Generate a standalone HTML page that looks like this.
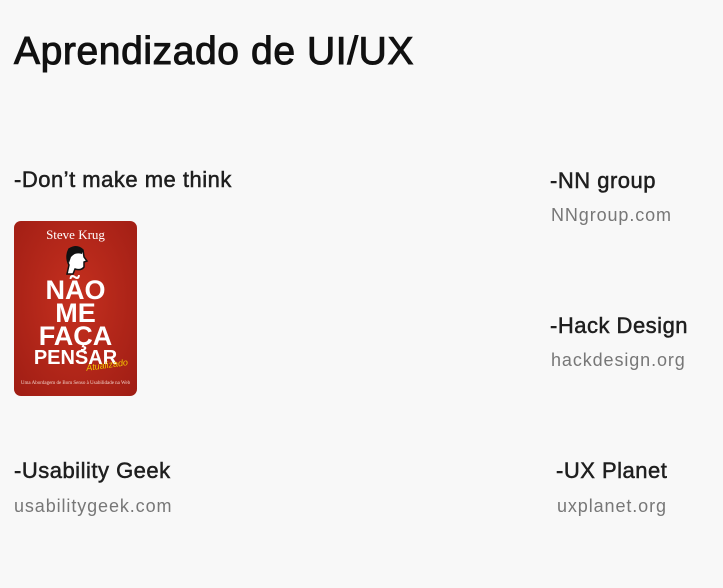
<!DOCTYPE html>
<html><head><meta charset="utf-8"><style>
body{margin:0;width:723px;height:588px;background:#f8f8f8;font-family:"Liberation Sans",sans-serif;position:relative;overflow:hidden;color:#1b1b1b}
.a{position:absolute;white-space:nowrap}
h1{position:absolute;left:14px;top:30px;margin:0;font-size:39px;font-weight:normal;letter-spacing:0.6px;color:#111;-webkit-text-stroke:1px #111}
.h{font-size:22px;color:#1e1e1e;letter-spacing:0.5px;-webkit-text-stroke:0.5px #1e1e1e}
.l{font-size:18px;color:#777;letter-spacing:0.9px}
.book{position:absolute;left:14px;top:221px;width:123px;height:175px;border-radius:7px;background:radial-gradient(ellipse at 50% 45%,#c5301f,#9f1d14);overflow:hidden;text-align:center;color:#fff}
</style></head><body>
<h1>Aprendizado de UI/UX</h1>
<div class="a h" style="left:14px;top:167px">-Don’t make me think</div>
<div class="a h" style="left:550px;top:168px">-NN group</div>
<div class="a l" style="left:551px;top:205px">NNgroup.com</div>
<div class="a h" style="left:550px;top:313px">-Hack Design</div>
<div class="a l" style="left:551px;top:350px">hackdesign.org</div>
<div class="a h" style="left:14px;top:458px">-Usability Geek</div>
<div class="a l" style="left:14px;top:496px">usabilitygeek.com</div>
<div class="a h" style="left:556px;top:458px">-UX Planet</div>
<div class="a l" style="left:557px;top:496px">uxplanet.org</div>
<div class="book">
<div style="font-family:'Liberation Serif',serif;font-size:13px;margin-top:6px">Steve Krug</div>
<svg width="26" height="30" viewBox="0 0 26 30" style="display:block;margin:2px auto 0"><path d="M6 4 Q14 -1 20 5 L21 12 L24 16 L21 17 L21 22 Q18 26 12 24 L10 29 L4 29 L6 20 Q2 12 6 4Z" fill="#fff" stroke="#111" stroke-width="1.5"/><path d="M6 4 Q14 0 20 5 L19 9 Q12 7 8 12 L6 18 Q2 10 6 4Z" fill="#111"/></svg>
<div style="font-weight:bold;font-size:27px;line-height:23px;margin-top:4px">NÃO<br>ME<br>FAÇA</div>
<div style="font-weight:bold;font-size:20px;line-height:20px">PENSAR</div>
<div style="position:absolute;left:72px;top:139px;font-size:9px;color:#f2c500;font-style:italic;transform:rotate(-8deg)">Atualizado</div>
<div style="position:absolute;left:0;right:0;top:160px;font-family:'Liberation Serif',serif;font-size:5px;color:#f0d0c8">Uma Abordagem de Bom Senso à Usabilidade na Web</div>
</div>
</body></html>
